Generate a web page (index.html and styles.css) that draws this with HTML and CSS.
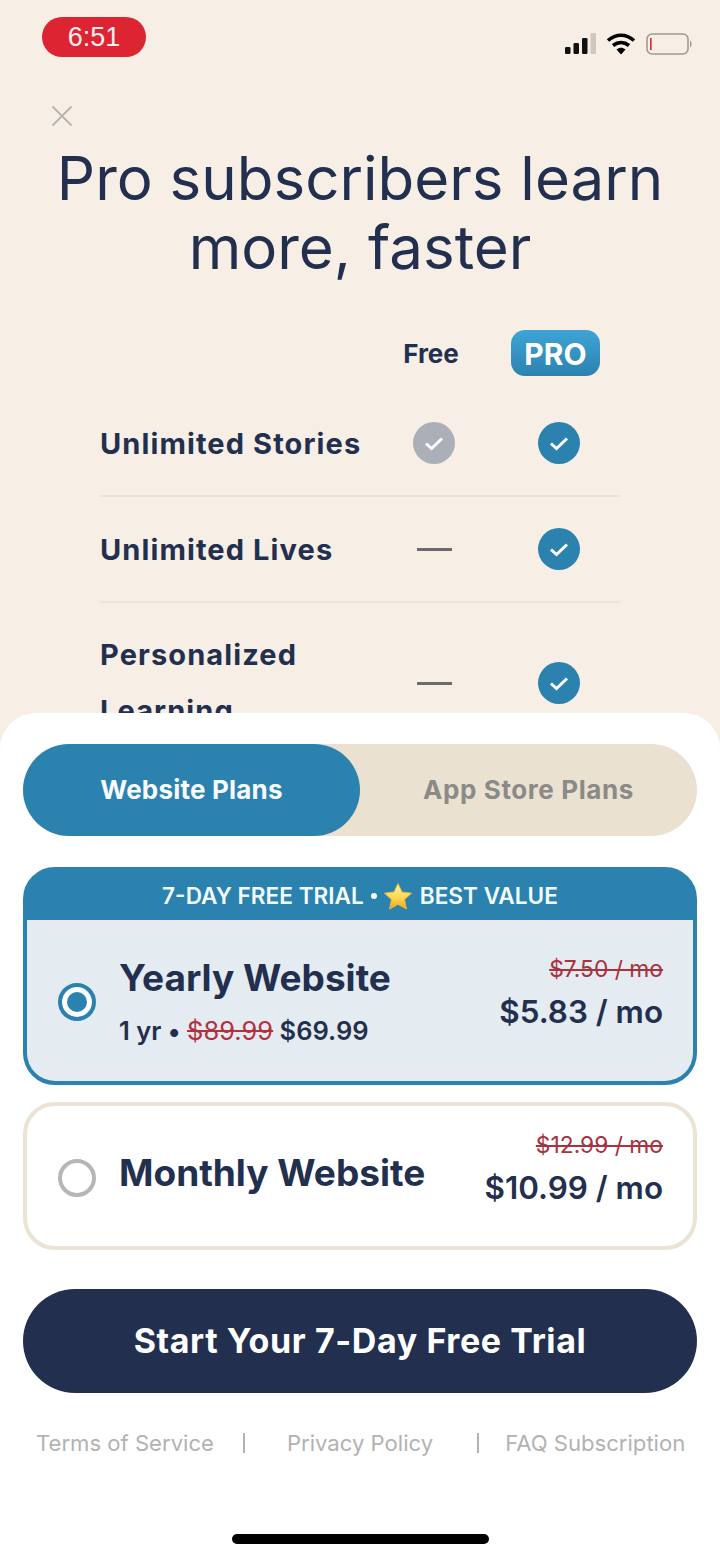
FILE: index.html
```html
<!DOCTYPE html>
<html>
<head>
	<title>Pro subscribers</title>
	<link rel="stylesheet" href="styles.css">
</head>
<body>
	<div class="screen">
		<div class="status">
			<div class="time">6:51</div>
			<div class="status-icons">
				<svg width="31" height="22" viewBox="0 0 31 22">
					<rect x="0" y="14" width="5.5" height="7" rx="1.2" fill="#111"/>
					<rect x="8.5" y="10" width="5.5" height="11" rx="1.2" fill="#111"/>
					<rect x="17" y="5" width="5.5" height="16" rx="1.2" fill="#111"/>
					<rect x="25.5" y="0" width="5.5" height="21" rx="1.2" fill="#cfc8be"/>
				</svg>
				<svg width="30" height="22" viewBox="0 0 30 22">
					<path d="M2 7.5C10 .5 20 .5 28 7.5" fill="none" stroke="#000" stroke-width="3.6"/>
					<path d="M7 12.5C12 8.5 18 8.5 23 12.5" fill="none" stroke="#000" stroke-width="3.6"/>
					<path d="M10.5 16.5C13.5 14.2 16.5 14.2 19.5 16.5L15 21.5Z" fill="#000"/>
				</svg>
				<svg width="46" height="22" viewBox="0 0 46 22">
					<rect x="1" y="1" width="41" height="20" rx="5" fill="none" stroke="#a09a92" stroke-width="1.6"/>
					<rect x="4" y="5" width="1.6" height="12" fill="#dd2433"/>
					<path d="M44 7.5c2 .6 2 6.4 0 7z" fill="#a09a92"/>
				</svg>
			</div>
		</div>

		<svg class="close" width="22" height="22" viewBox="0 0 22 22">
			<path d="M1.5 1.5L20.5 20.5M20.5 1.5L1.5 20.5" stroke="#b5b3ae" stroke-width="1.8" fill="none"/>
		</svg>

		<h1>Pro subscribers learn more, faster</h1>

		<div class="compare">
			<div class="compare-head">
				<span class="col-free">Free</span>
				<span class="col-pro"><span class="pro-badge">PRO</span></span>
			</div>
			<div class="row">
				<div class="row-name">Unlimited Stories</div>
				<div class="col-free">
					<svg class="tick" viewBox="0 0 42 42"><circle cx="21" cy="21" r="21" fill="#abafb8"/><path d="M13 21.5L18.5 26.5L29 16.5" stroke="#fff" stroke-width="3" fill="none"/></svg>
				</div>
				<div class="col-pro">
					<svg class="tick" viewBox="0 0 42 42"><circle cx="21" cy="21" r="21" fill="#2c82ae"/><path d="M13 21.5L18.5 26.5L29 16.5" stroke="#fff" stroke-width="3" fill="none"/></svg>
				</div>
			</div>
			<div class="row">
				<div class="row-name">Unlimited Lives</div>
				<div class="col-free"><div class="dash"></div></div>
				<div class="col-pro">
					<svg class="tick" viewBox="0 0 42 42"><circle cx="21" cy="21" r="21" fill="#2c82ae"/><path d="M13 21.5L18.5 26.5L29 16.5" stroke="#fff" stroke-width="3" fill="none"/></svg>
				</div>
			</div>
			<div class="row row-tall">
				<div class="row-name">Personalized Learning</div>
				<div class="col-free"><div class="dash"></div></div>
				<div class="col-pro">
					<svg class="tick" viewBox="0 0 42 42"><circle cx="21" cy="21" r="21" fill="#2c82ae"/><path d="M13 21.5L18.5 26.5L29 16.5" stroke="#fff" stroke-width="3" fill="none"/></svg>
				</div>
			</div>
		</div>

		<div class="sheet">
			<div class="toggle">
				<div class="toggle-on">Website Plans</div>
				<div class="toggle-off">App Store Plans</div>
			</div>

			<div class="plan plan-on">
				<div class="plan-banner">
					<span>7-DAY FREE TRIAL</span>
					<span class="banner-dot"></span>
					<svg width="30" height="28" viewBox="0 0 30 28">
						<defs>
							<linearGradient id="star" x1="0" y1="0" x2="0" y2="1">
								<stop offset="0" stop-color="#fff3a8"/>
								<stop offset="0.6" stop-color="#fbd54a"/>
								<stop offset="1" stop-color="#eda521"/>
							</linearGradient>
						</defs>
						<path d="M15 1.5L19 10L28.5 11.2L21.5 17.6L23.4 27L15 22.3L6.6 27L8.5 17.6L1.5 11.2L11 10Z" fill="url(#star)" stroke="#f0b634" stroke-width="1" stroke-linejoin="round"/>
					</svg>
					<span>BEST VALUE</span>
				</div>
				<div class="plan-body">
					<div class="radio radio-on"></div>
					<div class="plan-info">
						<div class="plan-name">Yearly Website</div>
						<div class="plan-sub">1 yr • <s>$89.99</s> $69.99</div>
					</div>
					<div class="plan-price">
						<s>$7.50 / mo</s>
						<div class="price-now">$5.83 / mo</div>
					</div>
				</div>
			</div>

			<div class="plan plan-off">
				<div class="plan-body">
					<div class="radio"></div>
					<div class="plan-info">
						<div class="plan-name">Monthly Website</div>
					</div>
					<div class="plan-price">
						<s>$12.99 / mo</s>
						<div class="price-now">$10.99 / mo</div>
					</div>
				</div>
			</div>

			<div class="cta">Start Your 7-Day Free Trial</div>

			<div class="links">
				<span>Terms of Service</span>
				<span class="sep sep-first"></span>
				<span>Privacy Policy</span>
				<span class="sep sep-second"></span>
				<span>FAQ Subscription</span>
			</div>

			<div class="home-bar"></div>
		</div>
	</div>
</body>
</html>
```

FILE: styles.css
```css
* {
	box-sizing: border-box;
	font-family: 'Inter', 'Liberation Sans', sans-serif;
}
html, body {
	margin: 0;
	background-color: #f7efe6;
}
.screen {
	position: relative;
	width: 720px;
	height: 1560px;
	overflow: hidden;
	background-color: #f7efe6;
	color: #222f4f;
}

.status {
	display: flex;
	justify-content: space-between;
	align-items: flex-start;
	padding: 17px 28px 0 42px;
}
.time {
	width: 104px;
	height: 40px;
	border-radius: 20px;
	background-color: #dd2433;
	color: #fbeeee;
	font-family: 'Liberation Sans', sans-serif;
	font-size: 27px;
	line-height: 40px;
	text-align: center;
}
.status-icons {
	display: flex;
	gap: 10px;
	margin-top: 16px;
}
.close {
	display: block;
	margin: 48px 0 0 51px;
}

h1 {
	margin: 17px 40px 0;
	font-size: 60px;
	line-height: 69px;
	font-weight: 400;
	text-align: center;
	color: #222f4f;
}

.compare {
	margin: 48px 100px 0;
	width: 520px;
}
.compare-head {
	display: flex;
	align-items: center;
	height: 46px;
	margin-bottom: 15px;
	padding-left: 260px;
	font-size: 26px;
	font-weight: 700;
}
.compare-head .col-free {
	width: 142px;
	text-align: center;
}
.compare-head .col-pro {
	width: 90px;
	margin-left: 9px;
	text-align: center;
}
.pro-badge {
	display: block;
	width: 89px;
	height: 46px;
	border-radius: 14px;
	background-image: linear-gradient(#3fa4d6, #2c82ae);
	color: #fff;
	font-size: 30px;
	font-weight: 700;
	line-height: 48px;
}
.row {
	display: flex;
	align-items: center;
	height: 106px;
	border-bottom: 2px solid #ece4da;
}
.row-name {
	width: 300px;
	font-size: 29px;
	font-weight: 700;
	letter-spacing: 1.1px;
}
.row .col-free {
	width: 68px;
	display: flex;
	justify-content: center;
}
.row .col-pro {
	width: 90px;
	margin-left: 46px;
	display: flex;
	justify-content: center;
}
.row-tall {
	height: 160px;
	border-bottom: none;
}
.row-tall .row-name {
	line-height: 56px;
}
.tick {
	display: block;
	width: 42px;
	height: 42px;
}
.dash {
	width: 35px;
	height: 3px;
	background-color: #6b6b6f;
}

.sheet {
	position: absolute;
	left: 0;
	right: 0;
	top: 713px;
	bottom: 0;
	padding: 31px 23px 0;
	background-color: #fff;
	border-radius: 36px 36px 0 0;
}
.toggle {
	display: flex;
	height: 92px;
	border-radius: 46px;
	background-color: #ebe1d0;
	font-size: 26px;
	font-weight: 700;
	line-height: 92px;
	text-align: center;
}
.toggle-on {
	width: 337px;
	border-radius: 46px;
	background-color: #2c82ae;
	color: #f7fbfd;
	letter-spacing: 0.2px;
}
.toggle-off {
	flex: 1;
	color: #8a8a88;
	letter-spacing: 0.6px;
}

.plan {
	border-radius: 32px;
	overflow: hidden;
}
.plan-on {
	height: 218px;
	margin-top: 31px;
	border: 4px solid #2c82ae;
	background-color: #2c82ae;
}
.plan-off {
	height: 148px;
	margin-top: 17px;
	border: 4px solid #ebe3d3;
	background-color: #fff;
}
.plan-banner {
	display: flex;
	justify-content: center;
	align-items: center;
	height: 49px;
	background-color: #2c82ae;
	color: #f3fafd;
	font-size: 22.6px;
	font-weight: 600;
}
.banner-dot {
	width: 6px;
	height: 6px;
	margin: 0 6px 0 7px;
	border-radius: 50%;
	background-color: #f3fafd;
}
.plan-banner svg {
	margin-right: 7px;
}
.plan-body {
	display: flex;
	align-items: center;
	padding: 0 30px 0 31px;
}
.plan-on .plan-body {
	height: 161px;
	background-color: #e4ecf1;
}
.plan-off .plan-body {
	height: 140px;
}
.plan-off .plan-info {
	padding-bottom: 6px;
}
.plan-off .radio {
	margin-top: 4px;
}
.radio {
	flex: none;
	width: 38px;
	height: 38px;
	border: 4px solid #b6b6b6;
	border-radius: 50%;
}
.radio-on {
	margin-top: 2px;
	border-color: #2c82ae;
	padding: 5px;
	background-color: #fff;
	background-clip: padding-box;
}
.radio-on::after {
	content: '';
	display: block;
	width: 20px;
	height: 20px;
	border-radius: 50%;
	background-color: #2c82ae;
}
.plan-info {
	flex: 1;
	margin-left: 23px;
}
.plan-name {
	font-size: 37px;
	font-weight: 700;
	line-height: 44px;
}
.plan-sub {
	margin-top: 15px;
	font-size: 25.5px;
	font-weight: 600;
}
.plan-sub s {
	font-weight: 400;
	color: #b5303c;
}
.plan-price {
	padding-bottom: 15px;
	text-align: right;
}
.plan-price s {
	font-size: 22.8px;
	color: #a8323f;
}
.price-now {
	margin-top: 11px;
	font-size: 31.4px;
	font-weight: 600;
}

.cta {
	height: 104px;
	margin-top: 39px;
	border-radius: 52px;
	background-color: #222f4f;
	color: #fff;
	font-size: 34px;
	font-weight: 700;
	letter-spacing: 0.6px;
	line-height: 104px;
	text-align: center;
}

.links {
	display: flex;
	align-items: center;
	margin-top: 37px;
	padding-left: 13px;
	color: #b2b2b2;
	font-size: 22.1px;
}
.sep {
	width: 2px;
	height: 20px;
	background-color: #b2b2b2;
}
.sep-first {
	margin: 0 42px 0 29px;
}
.sep-second {
	margin: 0 26px 0 44px;
}
.home-bar {
	width: 257px;
	height: 10px;
	margin: 78px auto 0;
	border-radius: 5px;
	background-color: #000;
}
```
